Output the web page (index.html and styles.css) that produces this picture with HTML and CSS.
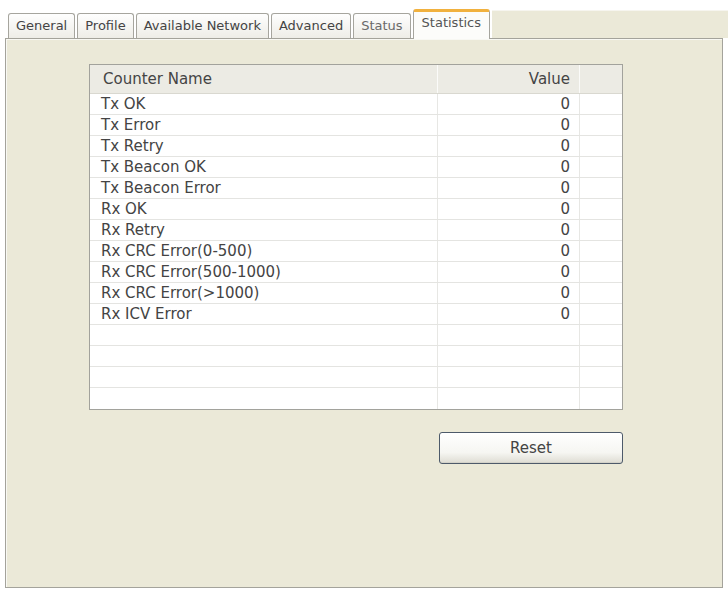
FILE: index.html
```html
<!DOCTYPE html>
<html>
<head>
<meta charset="utf-8">
<title>Statistics</title>
<link rel="stylesheet" href="styles.css">
</head>
<body>
<div class="window">
  <div class="tabstrip">
    <div class="tab">General</div>
    <div class="tab">Profile</div>
    <div class="tab">Available Network</div>
    <div class="tab">Advanced</div>
    <div class="tab tab-dim">Status</div>
    <div class="tab tab-active">Statistics</div>
    <div class="tab-filler"></div>
  </div>
  <div class="panel">
    <div class="content">
      <div class="list">
        <div class="row head"><div class="cell name">Counter Name</div><div class="cell value">Value</div><div class="cell pad"></div></div>
        <div class="row"><div class="cell name">Tx OK</div><div class="cell value">0</div><div class="cell pad"></div></div>
        <div class="row"><div class="cell name">Tx Error</div><div class="cell value">0</div><div class="cell pad"></div></div>
        <div class="row"><div class="cell name">Tx Retry</div><div class="cell value">0</div><div class="cell pad"></div></div>
        <div class="row"><div class="cell name">Tx Beacon OK</div><div class="cell value">0</div><div class="cell pad"></div></div>
        <div class="row"><div class="cell name">Tx Beacon Error</div><div class="cell value">0</div><div class="cell pad"></div></div>
        <div class="row"><div class="cell name">Rx OK</div><div class="cell value">0</div><div class="cell pad"></div></div>
        <div class="row"><div class="cell name">Rx Retry</div><div class="cell value">0</div><div class="cell pad"></div></div>
        <div class="row"><div class="cell name">Rx CRC Error(0-500)</div><div class="cell value">0</div><div class="cell pad"></div></div>
        <div class="row"><div class="cell name">Rx CRC Error(500-1000)</div><div class="cell value">0</div><div class="cell pad"></div></div>
        <div class="row"><div class="cell name">Rx CRC Error(&gt;1000)</div><div class="cell value">0</div><div class="cell pad"></div></div>
        <div class="row"><div class="cell name">Rx ICV Error</div><div class="cell value">0</div><div class="cell pad"></div></div>
        <div class="row"><div class="cell name"></div><div class="cell value"></div><div class="cell pad"></div></div>
        <div class="row"><div class="cell name"></div><div class="cell value"></div><div class="cell pad"></div></div>
        <div class="row"><div class="cell name"></div><div class="cell value"></div><div class="cell pad"></div></div>
        <div class="row"><div class="cell name"></div><div class="cell value"></div><div class="cell pad"></div></div>
      </div>
      <button class="btn" type="button">Reset</button>
    </div>
  </div>
</div>
</body>
</html>
```

FILE: styles.css
```css
body {
  margin: 0;
  background: #ffffff;
  font-family: "DejaVu Sans", "Liberation Sans", sans-serif;
  color: #444444;
}

.tabstrip {
  display: flex;
  align-items: flex-end;
  height: 38px;
  padding-left: 8px;
  gap: 2px;
}

.tab {
  height: 25px;
  box-sizing: border-box;
  padding: 0 7px;
  border: 1px solid #a6a59e;
  border-bottom: none;
  border-radius: 3px 3px 0 0;
  background: linear-gradient(#fefefe, #eeede7);
  font-size: 13px;
  line-height: 24px;
  color: #444444;
  white-space: nowrap;
}

.tab-dim {
  color: #6a6a6a;
}

.tab-active {
  height: 30px;
  margin-bottom: -1px;
  padding: 0 8px;
  border-top: 3px solid #f1b13e;
  background: #fcfcfa;
  line-height: 22px;
  color: #555555;
  position: relative;
  z-index: 1;
}

.tab-filler {
  flex: 1;
  align-self: stretch;
  margin-top: 10px;
  background: #ebe9d8;
  border-top: 1px solid #f6f5ef;
}

.panel {
  margin-left: 5px;
  width: 718px;
  height: 550px;
  box-sizing: border-box;
  border: 1px solid #a4a39b;
  background: #ebe9d8;
  box-shadow: inset 1px 1px 0 #f8f8f3;
  padding: 25px 0 0 83px;
}

.content {
  width: 534px;
  display: flex;
  flex-direction: column;
  align-items: flex-end;
}

.list {
  width: 100%;
  box-sizing: border-box;
  border: 1px solid #a2a29c;
  background: #ffffff;
}

.row {
  display: grid;
  grid-template-columns: 348px 142px 1fr;
  height: 21px;
  box-sizing: border-box;
  border-bottom: 1px solid #e4e4e1;
}

.row:last-child {
  border-bottom: none;
}

.cell {
  border-right: 1px solid #e7e7e4;
  padding: 0 9px 0 11px;
  font-size: 15px;
  line-height: 20px;
  white-space: nowrap;
  overflow: hidden;
}

.cell.value {
  text-align: right;
}

.cell.pad {
  border-right: none;
}

.head {
  height: 29px;
  background: #ecebe4;
  border-bottom: 1px solid #d9d8d0;
}

.head .cell {
  line-height: 28px;
  border-right-color: #fbfbf9;
}

.head .name {
  padding-left: 13px;
}

.btn {
  margin-top: 22px;
  width: 184px;
  height: 32px;
  border: 1px solid #4d5a6a;
  border-radius: 3px;
  background: linear-gradient(#ffffff, #f6f6f2 65%, #dedcd3);
  box-shadow: inset 0 -1px 0 #d3d2c9;
  font-family: "DejaVu Sans", "Liberation Sans", sans-serif;
  font-size: 15px;
  color: #444444;
  padding: 0;
}
```
